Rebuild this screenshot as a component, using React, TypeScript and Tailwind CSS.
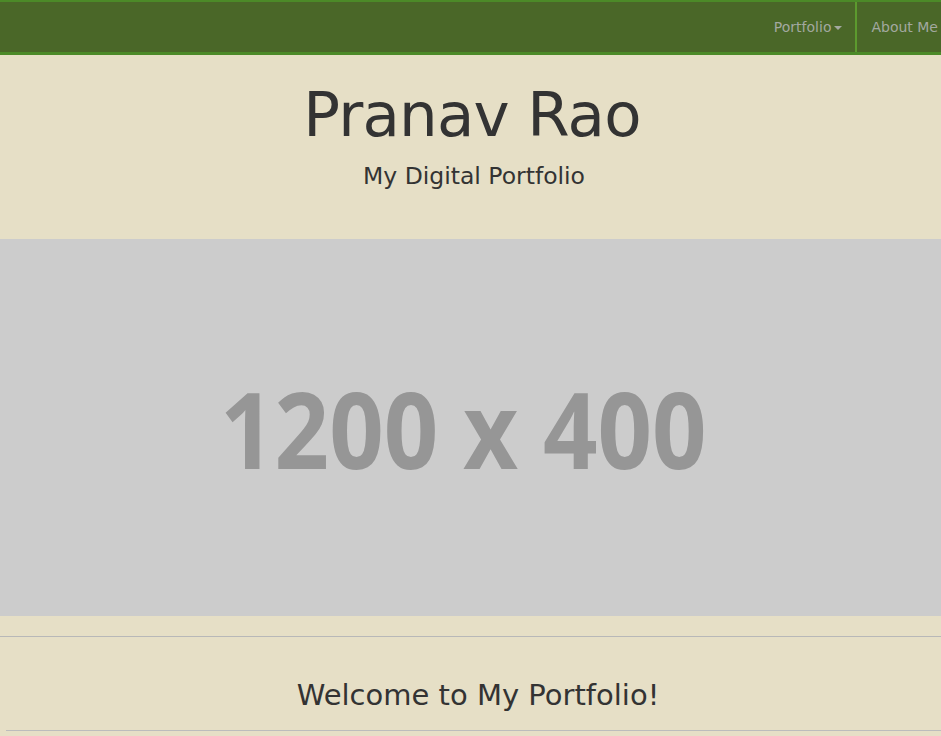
export default function App() {
  return (
    <div className="min-h-[736px] w-[941px] overflow-hidden bg-[#e6dfc6] font-['Lucida_Grande','DejaVu_Sans',sans-serif] text-[#333333]">
      {/* Navbar */}
      <nav className="flex h-[55px] justify-end border-t-2 border-b-[3px] border-[#4c8a28] bg-[#4a6728]">
        <a className="flex items-center gap-[3px] pr-[13px] text-[14px] text-[#a3a9a0]">
          Portfolio
          <span className="mt-[2px] h-0 w-0 border-x-[4px] border-t-[4px] border-x-transparent border-t-[#a3a9a0]" />
        </a>
        <div className="w-[2px] bg-[#5c9a2e]" />
        <a className="flex items-center pl-[14px] pr-[3px] text-[14px] text-[#a3a9a0]">About Me</a>
      </nav>

      {/* Header */}
      <header className="flex flex-col items-center pt-[22px] pb-[48px]">
        <h1 className="pl-[3px] text-[61px] leading-[76px] tracking-[-0.8px]">Pranav Rao</h1>
        <p className="mt-[8px] pl-[7px] text-[23.5px] leading-[30px]">My Digital Portfolio</p>
      </header>

      {/* Banner placeholder */}
      <div className="flex h-[377px] items-center justify-center bg-[#cccccc] pr-[15px]">
        <span className="origin-center scale-x-[0.9] whitespace-nowrap font-['Open_Sans',sans-serif] text-[106px] font-bold leading-none text-[#969696]">
          1200 x 400
        </span>
      </div>

      <div className="h-[20px]" />
      <hr className="border-t border-[#b8b8b8]" />

      {/* Welcome */}
      <section className="pl-[6px]">
        <h2 className="pl-[9px] pt-[38px] pb-[15px] text-center text-[29px] leading-[40px]">Welcome to My Portfolio!</h2>
        <hr className="border-t border-[#bcbcbc]" />
      </section>
    </div>
  );
}
